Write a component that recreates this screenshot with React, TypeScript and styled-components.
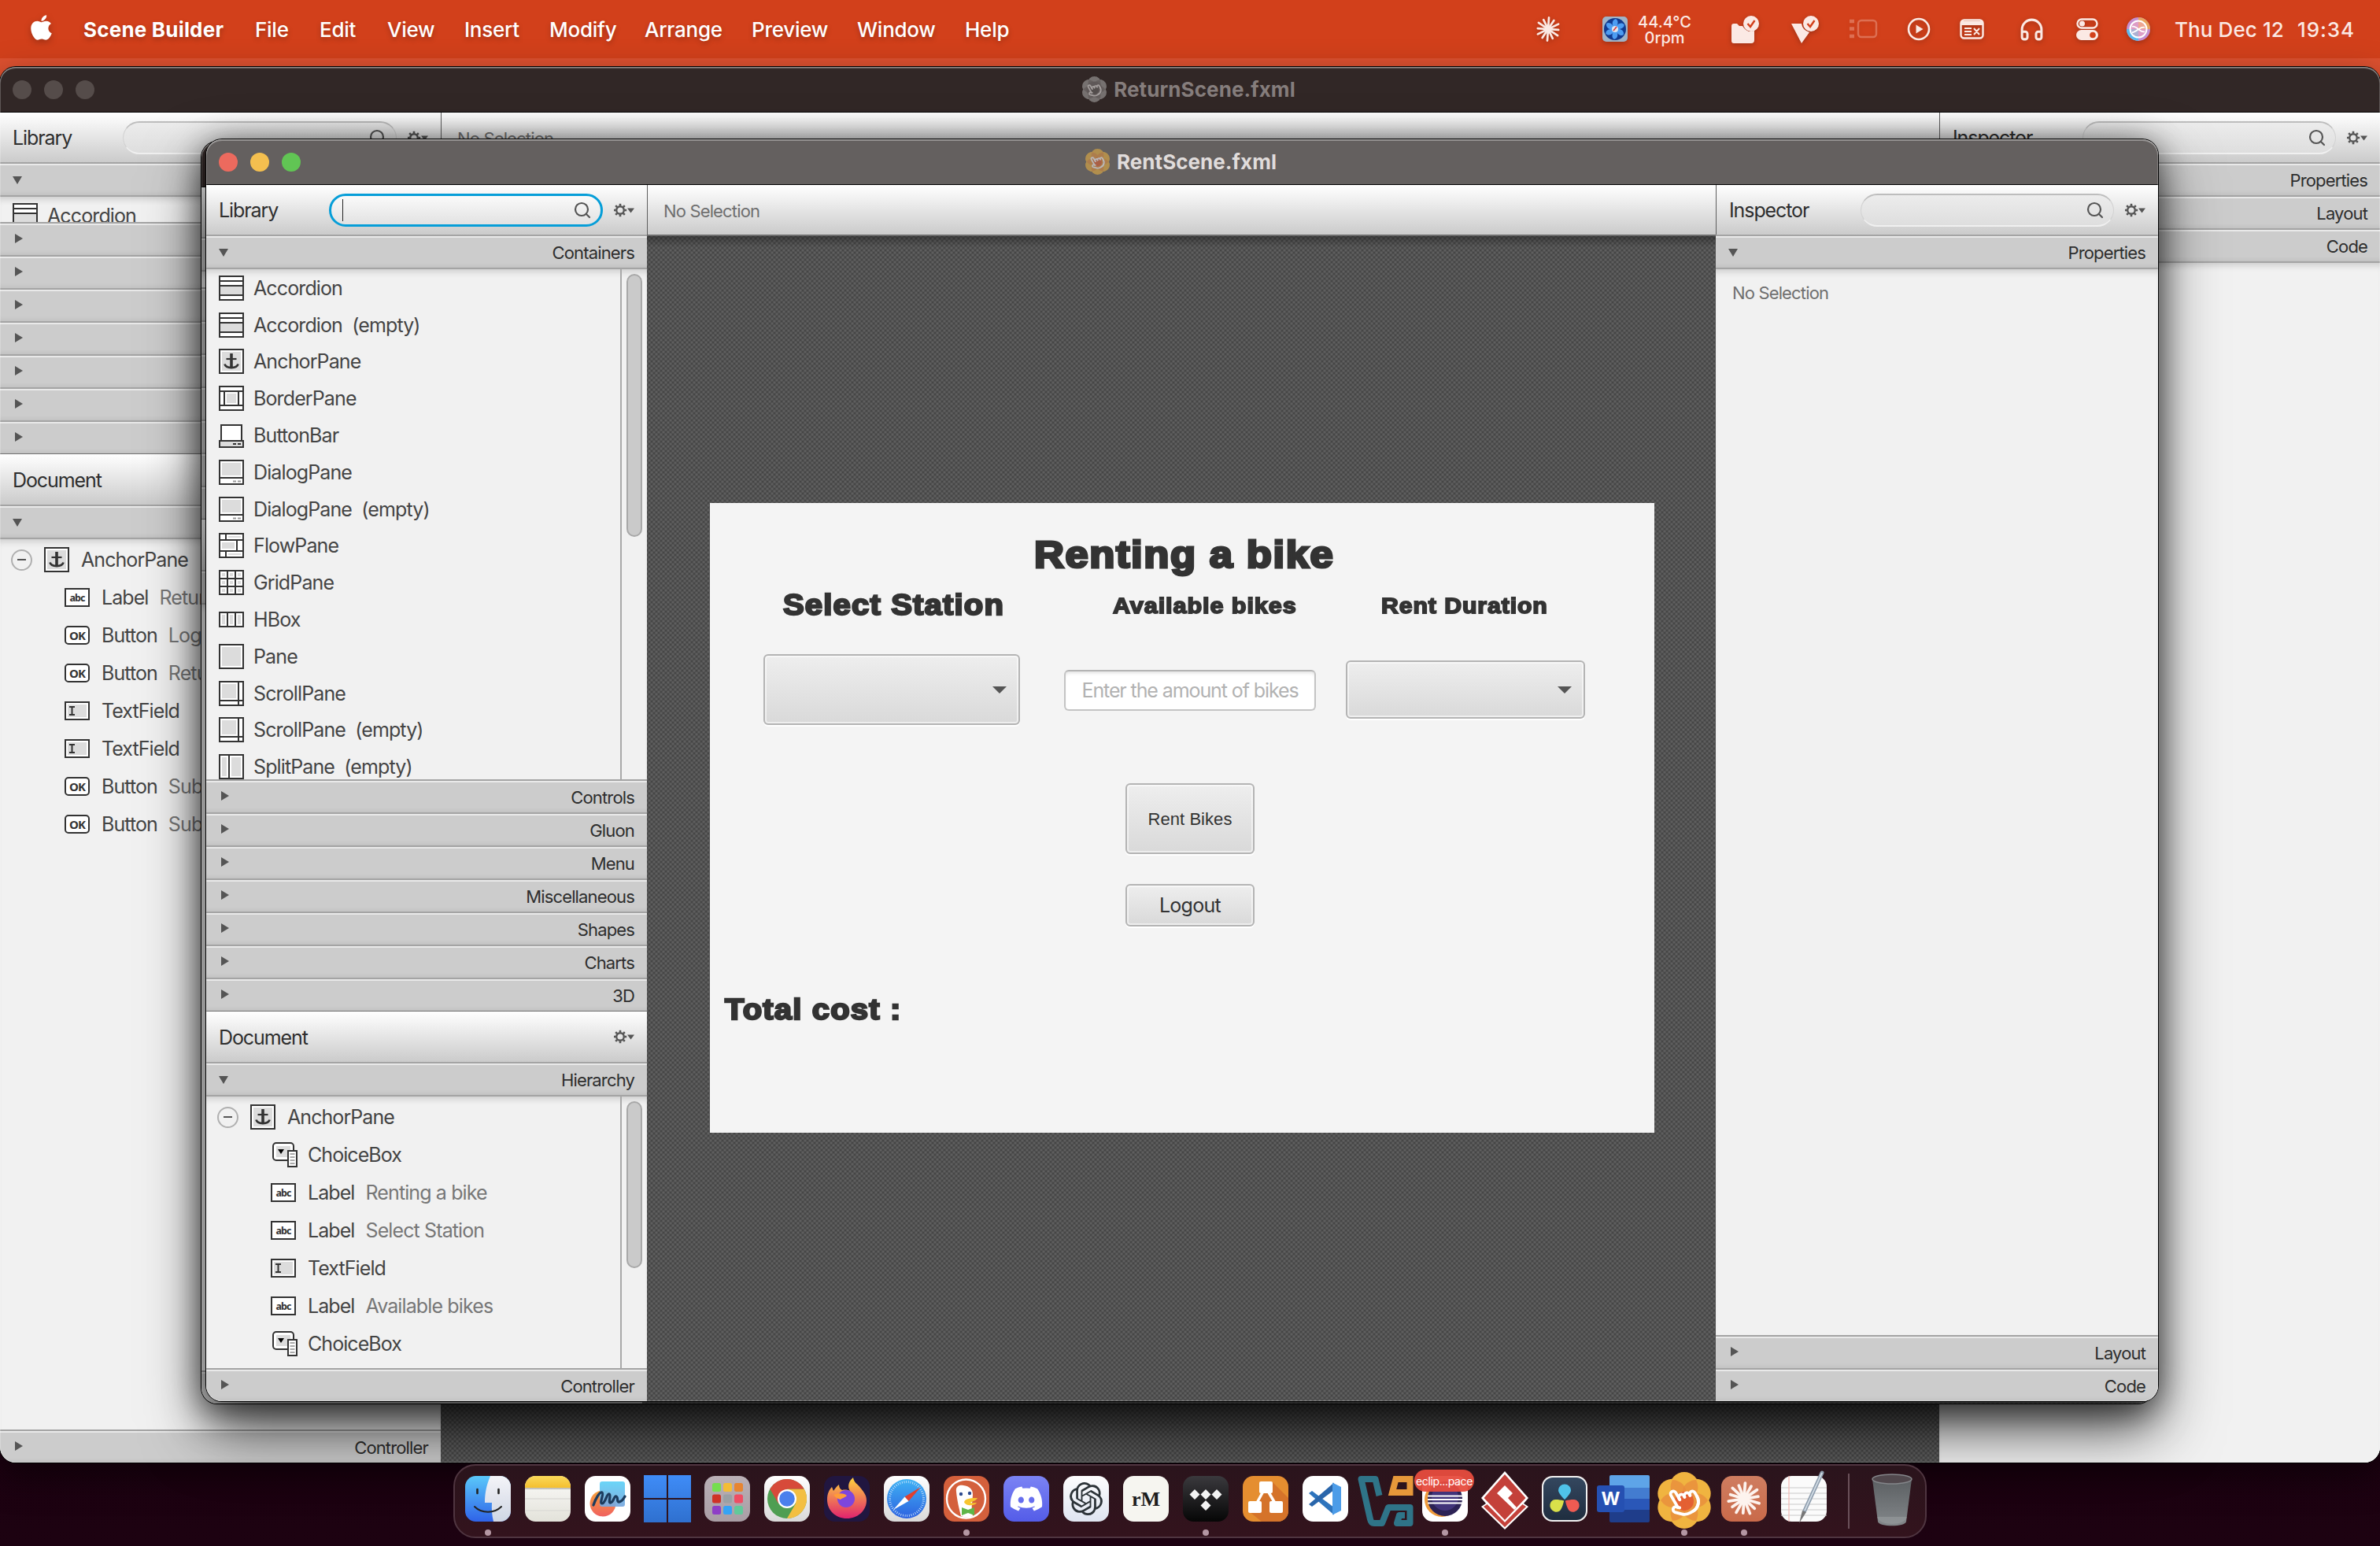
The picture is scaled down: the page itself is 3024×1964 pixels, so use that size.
import React from "react";
import styled, { createGlobalStyle, css } from "styled-components";
import { FaApple, FaDiscord } from "react-icons/fa";
import { SiOpenai } from "react-icons/si";
import { Pointer, Search, Headphones } from "lucide-react";

const Global = createGlobalStyle`
  html, body { margin: 0; padding: 0; background: #1c0210; }
  * { box-sizing: border-box; }
  body { font-family: Inter, "Liberation Sans", sans-serif; }
`;

const Desktop = styled.div`
  position: relative;
  width: 3024px;
  height: 1964px;
  overflow: hidden;
  background: linear-gradient(#dd5130 0, #dd5130 200px, #1a0010 1500px, #1d0211 1964px);
`;

/* ---------- menu bar ---------- */

const MenuBar = styled.header`
  height: 74px;
  background: #d2401b;
  display: flex;
  align-items: center;
  padding: 0 32px 0 39px;
  color: #fff;
  font-size: 26px;
`;

const AppleMark = styled(FaApple)`
  width: 27px;
  height: 36px;
  margin: -5px 40px 0 0;
  filter: drop-shadow(0 3px 4px rgba(0, 0, 0, 0.25));
`;

const MenuItem = styled.span<{ $w: number; $bold?: boolean }>`
  flex: none;
  width: ${(p) => p.$w}px;
  white-space: nowrap;
  font-weight: ${(p) => (p.$bold ? 700 : 500)};
  letter-spacing: ${(p) => (p.$bold ? "0.2px" : "-0.25px")};
  text-shadow: 0 3px 6px rgba(0, 0, 0, 0.25);
`;

const Spacer = styled.div`
  flex: 1;
`;

const StatusArea = styled.div`
  display: flex;
  align-items: center;
  color: #fbe9e4;
  svg {
    flex: none;
    filter: drop-shadow(0 2px 3px rgba(0, 0, 0, 0.25));
  }
`;

const StatusSlot = styled.div<{ $w: number }>`
  width: ${(p) => p.$w}px;
  height: 40px;
  display: flex;
  align-items: center;
  flex: none;
`;

const Sensor = styled.div`
  width: 118px;
  display: flex;
  flex-direction: column;
  font-size: 20px;
  line-height: 20px;
  font-weight: 500;
  letter-spacing: 0;
  padding-top: 2px;
  span {
    width: 68px;
    text-align: center;
  }
`;

const Clock = styled.span<{ $w: number; $ls: number }>`
  width: ${(p) => p.$w}px;
  white-space: nowrap;
  font-weight: 500;
  letter-spacing: ${(p) => p.$ls}px;
`;

/* ---------- windows ---------- */

const WindowFrame = styled.section<{ $x: number; $y: number; $w: number; $h: number; $active?: boolean }>`
  position: absolute;
  left: ${(p) => p.$x}px;
  top: ${(p) => p.$y}px;
  width: ${(p) => p.$w}px;
  height: ${(p) => p.$h}px;
  border-radius: 20px;
  overflow: hidden;
  display: flex;
  flex-direction: column;
  background: #f1f1f1;
  box-shadow: 0 0 0 1px #000,
    ${(p) => (p.$active ? "0 36px 80px rgba(0,0,0,.6), 0 0 36px rgba(0,0,0,.32)" : "0 16px 44px rgba(0,0,0,.5)")};
  &::after {
    content: "";
    position: absolute;
    inset: 0;
    border-radius: 20px;
    pointer-events: none;
    box-shadow: inset 0 2px 0 rgba(255, 255, 255, 0.28), inset 0 0 0 1px rgba(255, 255, 255, 0.22);
  }
`;

const TitleBar = styled.div<{ $active?: boolean }>`
  flex: none;
  height: 58px;
  display: grid;
  grid-template-columns: 1fr auto 1fr;
  align-items: center;
  background: ${(p) => (p.$active ? "#64605f" : "#312726")};
  border-bottom: 1px solid #000;
  padding: 0 16px;
`;

const Lights = styled.div`
  display: flex;
  gap: 16px;
`;

const Light = styled.i<{ $c: string }>`
  width: 24px;
  height: 24px;
  border-radius: 50%;
  background: ${(p) => p.$c};
`;

const Title = styled.div<{ $active?: boolean }>`
  display: flex;
  align-items: center;
  gap: 8px;
  margin: -1px 0 0 -4px;
  font-size: 26px;
  font-weight: 700;
  letter-spacing: ${(p) => (p.$active ? 0.05 : 0.08)}px;
  color: ${(p) => (p.$active ? "#e0dcdb" : "#857d7c")};
`;

const WindowBody = styled.div`
  flex: 1;
  display: flex;
  min-height: 0;
`;

const SidePanel = styled.aside`
  flex: none;
  width: 560px;
  display: flex;
  flex-direction: column;
`;

const InspectorPanel = styled.aside<{ $w: number }>`
  flex: none;
  width: ${(p) => p.$w}px;
  display: flex;
  flex-direction: column;
  background: #f1f1f1;
`;

const Center = styled.main`
  flex: 1;
  display: flex;
  flex-direction: column;
`;

const toolbar = css`
  flex: none;
  display: flex;
  align-items: center;
  background: linear-gradient(#ffffff, #cbcbcb);
`;

const PanelToolbar = styled.div<{ $doc?: boolean; $divider?: boolean }>`
  ${toolbar}
  height: ${(p) => (p.$doc ? 65 : 63)}px;
  border-top: ${(p) => (p.$doc ? "1px solid #6f6f6f" : "0")};
  border-left: ${(p) => (p.$divider ? "1px solid #5d5d5d" : "0")};
  padding: 0 16px 0 16px;
`;

const PanelTitle = styled.span`
  flex: 1;
  padding-top: 1px;
  font-size: 25px;
  letter-spacing: -1.1px;
  color: #2e2e2e;
`;

const CenterToolbar = styled.div`
  ${toolbar}
  height: 65px;
  border-left: 1px solid #5d5d5d;
  border-bottom: 2px solid #6b6b6b;
  padding-left: 20px;
`;

const Muted = styled.span`
  padding-top: 2px;
  font-size: 22px;
  letter-spacing: -0.85px;
  color: #6f6f6f;
`;

const SearchField = styled.div<{ $w: number; $focus?: boolean }>`
  width: ${(p) => p.$w}px;
  height: 42px;
  margin-right: 14px;
  border-radius: 21px;
  display: flex;
  align-items: center;
  justify-content: space-between;
  padding: 0 11px 0 14px;
  color: #555;
  ${(p) =>
    p.$focus
      ? css`
          border: 3px solid #069ed8;
          background: linear-gradient(#fafafa, #e2e2e2);
        `
      : css`
          border: 1px solid #d2d2d2;
          border-top: 2px solid #bdbdbd;
          border-bottom: 2px solid #f0f0f0;
          background: linear-gradient(#ececec, #dedede);
        `}
`;

const Caret = styled.i<{ $on?: boolean }>`
  width: 1px;
  height: 28px;
  background: ${(p) => (p.$on ? "#222" : "transparent")};
`;

const SectionBar = styled.div`
  flex: none;
  height: 42px;
  display: flex;
  align-items: center;
  justify-content: space-between;
  padding: 0 16px;
  background: #cccccc;
  border-top: 2px solid #a4a4a4;
  box-shadow: inset 0 2px 0 #e9e9e9, inset 0 -6px 6px -5px rgba(0, 0, 0, 0.08);
  font-size: 22px;
  letter-spacing: -0.85px;
  color: #2e2e2e;
  span {
    padding-top: 2px;
  }
`;

const Arrow = styled.svg<{ $open?: boolean }>`
  display: block;
  margin-top: ${(p) => (p.$open ? 1 : -2)}px;
  margin-left: ${(p) => (p.$open ? 0 : 3)}px;
`;

const SectionContent = styled.div`
  flex: 1;
  min-height: 0;
  overflow: hidden;
  display: flex;
  border-top: 2px solid #a4a4a4;
  background: #f1f1f1;
  box-shadow: inset 0 8px 8px -5px rgba(0, 0, 0, 0.16);
`;

const Rows = styled.div`
  flex: 1;
  display: flex;
  flex-direction: column;
`;

const Gutter = styled.div`
  flex: none;
  width: 34px;
  border-left: 2px solid #a9a9a9;
  padding: 6px 6px 0 6px;
`;

const Thumb = styled.div<{ $h: number }>`
  width: 20px;
  height: ${(p) => p.$h}px;
  border: 2px solid #a8a8a8;
  border-radius: 10px;
  background: #cacaca;
`;

const ListRow = styled.div`
  flex: none;
  height: 46.8px;
  display: flex;
  align-items: center;
  gap: 12px;
  padding: 1px 0 0 16px;
  font-size: 25px;
  letter-spacing: -0.88px;
  color: #444;
  white-space: pre;
`;

const TreeRow = styled.div<{ $root?: boolean }>`
  flex: none;
  height: 48px;
  display: flex;
  align-items: center;
  padding-left: ${(p) => (p.$root ? 14 : 82)}px;
  font-size: 25px;
  letter-spacing: -0.93px;
  color: #444;
  white-space: nowrap;
  svg {
    flex: none;
    margin-right: 15px;
  }
`;

const Tree = styled(Rows)`
  padding-top: 2px;
`;

const Disclosure = styled.i`
  width: 27px;
  height: 27px;
  margin-right: 15px;
  border: 2px solid #b0b0b0;
  border-radius: 50%;
  display: flex;
  align-items: center;
  justify-content: center;
  &::after {
    content: "";
    width: 11px;
    height: 2px;
    background: #555;
  }
`;

const Detail = styled.span`
  margin-left: 14px;
  letter-spacing: -0.88px;
  color: #777;
`;

const LibraryBlock = styled.div<{ $h: number }>`
  flex: none;
  height: ${(p) => p.$h}px;
  display: flex;
  flex-direction: column;
`;

const DocumentBlock = styled.div`
  flex: 1;
  min-height: 0;
  display: flex;
  flex-direction: column;
`;

const Workspace = styled.div`
  flex: 1;
  display: flex;
  align-items: center;
  justify-content: center;
  background-color: #454545;
  background-image: linear-gradient(rgba(0, 0, 0, 0.3), transparent 14px),
    radial-gradient(circle at 50% 50%, #606060 0.6px, rgba(96, 96, 96, 0) 2.6px),
    radial-gradient(circle at 50% 50%, #606060 0.6px, rgba(96, 96, 96, 0) 2.6px);
  background-size: 100% 100%, 6px 6px, 6px 6px;
  background-position: 0 0, 0 0, 3px 3px;
`;

/* ---------- designed scene (an AnchorPane: children sit at free coordinates) ---------- */

const AnchorScene = styled.div`
  position: relative;
  width: 1200px;
  height: 800px;
  margin: -2px 0 0 2px;
  background: #f4f4f4;
  color: #333;
`;

const Heading = styled.div<{ $x: number; $y: number; $size: number; $stretch: number }>`
  position: absolute;
  left: ${(p) => p.$x}px;
  top: ${(p) => p.$y}px;
  font-family: "Liberation Sans", Arial, sans-serif;
  font-size: ${(p) => p.$size}px;
  line-height: ${(p) => p.$size}px;
  font-weight: 700;
  letter-spacing: 0.03em;
  -webkit-text-stroke: 0.065em #333;
  transform: scaleX(${(p) => p.$stretch});
  transform-origin: 0 50%;
  white-space: nowrap;
`;

const Control = styled.div<{ $x: number; $y: number; $w: number; $h: number; $small?: boolean }>`
  position: absolute;
  left: ${(p) => p.$x}px;
  top: ${(p) => p.$y}px;
  width: ${(p) => p.$w}px;
  height: ${(p) => p.$h}px;
  display: flex;
  align-items: center;
  justify-content: center;
  border: 2px solid #b4b4b4;
  border-radius: 6px;
  background: linear-gradient(#eeeeee, #d9d9d9);
  box-shadow: inset 0 0 0 2px rgba(255, 255, 255, 0.55), 0 2px 0 #fff;
  font-family: ${(p) => (p.$small ? '"Liberation Sans", Arial, sans-serif' : "Inter, sans-serif")};
  font-size: ${(p) => (p.$small ? 22 : 25)}px;
  letter-spacing: ${(p) => (p.$small ? 0.05 : -0.7)}px;
  padding-top: ${(p) => (p.$small ? 2 : 0)}px;
  color: #333;
  white-space: nowrap;
`;

const Choice = styled(Control)`
  justify-content: flex-end;
  padding-right: 15px;
`;

const Field = styled(Control)`
  background: #fff;
  border-color: #c4c4c4;
  border-top-color: #b4b4b4;
  box-shadow: inset 0 4px 4px -2px rgba(0, 0, 0, 0.12);
  letter-spacing: -1.1px;
  color: #b2b2b2;
`;

/* ---------- dock ---------- */

const DockLayer = styled.nav`
  position: absolute;
  left: 576px;
  top: 1860px;
  width: 1872px;
  height: 94px;
  border: 2px solid #4f3540;
  border-radius: 28px;
  background: linear-gradient(#2a141c, #33131d);
  display: flex;
  padding: 0 0 0 4px;
`;

const DockSlot = styled.div<{ $w?: number }>`
  flex: none;
  width: ${(p) => p.$w ?? 76}px;
  height: 90px;
  position: relative;
  display: flex;
  flex-direction: column;
  align-items: center;
  padding-top: 5px;
  > svg {
    flex: none;
    overflow: visible;
  }
`;

const Running = styled.i`
  width: 8px;
  height: 8px;
  border-radius: 50%;
  background: #b497a3;
`;

const DockDivider = styled.i`
  flex: none;
  width: 2px;
  height: 70px;
  margin: 10px 0 0 18px;
  background: #6a5059;
`;

const Badge = styled.span`
  position: absolute;
  left: -1px;
  top: 5px;
  width: 76px;
  height: 28px;
  border-radius: 14px;
  background: rgba(231, 76, 62, 0.95);
  color: #fff;
  font-size: 14px;
  line-height: 29px;
  letter-spacing: -0.35px;
  text-align: center;
  white-space: nowrap;
`;

/* ---------- library & hierarchy glyphs ---------- */

const INK = "#333333";
const GREY = "#dcdcdc";

type GlyphName =
  | "accordion" | "anchor" | "border" | "buttonbar" | "dialog" | "flow" | "grid" | "hbox"
  | "pane" | "scroll" | "split" | "label" | "button" | "textfield" | "choice";

const g = (x: number, y: number, w: number, h: number) => (
  <rect key={`${x}-${y}`} x={x} y={y} width={w} height={h} fill={GREY} stroke="none" />
);

const panes: Partial<Record<GlyphName, React.ReactNode>> = {
  accordion: <>{g(2, 14, 28, 10)}<path d="M0 7H32M0 13H32M0 25H32" /></>,
  anchor: (
    <>
      {g(4, 4, 24, 24)}
      <path d="M16 6V24" strokeWidth={3.600} />
      <path d="M9.500 13H22.500" strokeWidth={2.200} />
      <path d="M7.500 19.500C9 25.500 23 25.500 24.500 19.500" strokeWidth={2.800} />
    </>
  ),
  border: <>{g(10, 10, 12, 12)}<path d="M0 7H32M0 25H32M7 7V25M25 7V25" /></>,
  dialog: <>{g(4, 4, 24, 16)}<path d="M0 23H32" /><path d="M18 27.500h4M24 27.500h4" stroke="#999" /></>,
  flow: <>{g(12, 4, 16, 2)}{g(4, 12, 16, 8)}{g(12, 26, 16, 2)}<path d="M0 9H32M0 23H32M9 0V9M23 9V23M9 23V32" /></>,
  grid: <>{[4, 14, 24].map((x) => [4, 14, 24].map((y) => g(x, y, 4, 4)))}<path d="M11 0V32M21 0V32M0 11H32M0 21H32" /></>,
  pane: g(4, 4, 24, 24),
  scroll: <>{g(4, 4, 18, 18)}<path d="M25 0V32M0 25H32" /></>,
  split: <>{g(4, 4, 6, 24)}{g(16, 4, 12, 24)}<path d="M13 0V32" /></>,
};

const WideText = styled.text`
  font-family: "Noto Sans", "Open Sans", sans-serif;
  font-weight: 700;
  fill: ${INK};
  stroke: none;
  text-anchor: middle;
`;

function Glyph({ name }: { name: GlyphName }) {
  const common = { width: 32, height: 32, viewBox: "0 0 32 32", stroke: INK, strokeWidth: 2, fill: "none" };
  switch (name) {
    case "buttonbar":
      return (
        <svg {...common}>
          <rect x={3} y={3} width={26} height={20} fill="#fff" />
          <rect x={1} y={23} width={30} height={8} fill={GREY} />
          <path d="M18 27h4M24 27h4" />
        </svg>
      );
    case "hbox":
      return (
        <svg {...common}>
          <rect x={1} y={7} width={30} height={18} fill="#fff" />
          {g(4, 10, 4, 12)}{g(14, 10, 4, 12)}{g(24, 10, 4, 12)}
          <path d="M11 7V25M21 7V25" />
        </svg>
      );
    case "label":
      return (
        <svg {...common}>
          <rect x={1} y={5} width={30} height={22} fill="#fff" />
          <WideText x={16} y={21} fontSize={12.500}>abc</WideText>
        </svg>
      );
    case "button":
      return (
        <svg {...common}>
          <rect x={1} y={5} width={30} height={22} rx={4} fill="#fff" />
          <WideText x={16} y={21.500} fontSize={15}>OK</WideText>
        </svg>
      );
    case "textfield":
      return (
        <svg {...common}>
          <rect x={1} y={5} width={30} height={22} fill="#fff" />
          {g(4, 8, 24, 16)}
          <path d="M6 11h7M6 21h7M9.500 11v10" />
        </svg>
      );
    case "choice":
      return (
        <svg {...common} overflow="visible">
          <rect x={3} y={1} width={26} height={22} rx={4} fill="#fff" />
          {g(7, 5, 18, 14)}
          <path d="M9 9h8l-4 6z" fill="#000" stroke="none" />
          <rect x={22} y={11} width={11} height={20} fill="#fff" />
          <path d="M24.500 15h6M24.500 19h6M24.500 23h6M24.500 27h6" stroke="#aaa" />
        </svg>
      );
    default:
      return (
        <svg {...common}>
          <rect x={1} y={1} width={30} height={30} fill="#fff" stroke="none" />
          {panes[name]}
          <rect x={1} y={1} width={30} height={30} />
        </svg>
      );
  }
}

const Gear = () => (
  <svg width={26} height={18} viewBox="0 0 26 18" fill="none" stroke="#555">
    <circle cx={8} cy={9} r={4.800} strokeWidth={2.400} />
    {[0, 45, 90, 135, 180, 225, 270, 315].map((a) => (
      <path key={a} d="M8 3.500V0.800" strokeWidth={2.600} transform={`rotate(${a} 8 9)`} />
    ))}
    <path d="M17 6.500h9l-4.500 6z" fill="#555" stroke="none" />
  </svg>
);

const Toggle = ({ open }: { open?: boolean }) =>
  open ? (
    <Arrow $open width={12} height={10}><path d="M0 0h12l-6 10z" fill="#555" /></Arrow>
  ) : (
    <Arrow width={10} height={12}><path d="M0 0v12l10-6z" fill="#555" /></Arrow>
  );

const Section = ({ label, open }: { label?: string; open?: boolean }) => (
  <SectionBar>
    <Toggle open={open} />
    <span>{label}</span>
  </SectionBar>
);

/* ---------- Scene Builder brand flower ---------- */

const Flower = ({ size, opacity = 1, grey }: { size: number; opacity?: number; grey?: boolean }) => {
  const ring = [0, 60, 120, 180, 240, 300];
  return (
    <svg width={size} height={size} viewBox="0 0 72 72" opacity={opacity}>
      {ring.map((a) => (
        <circle key={a} cx={36} cy={18.500} r={18.500} fill={grey ? "#8e8a89" : "#f0b440"} transform={`rotate(${a} 36 36)`} />
      ))}
      <circle cx={36} cy={36} r={22} fill={grey ? "#6f6a69" : "#f0b440"} />
      {ring.map((a) => (
        <path key={a} d="M36 36C24 28 24 14 36 6 48 14 48 28 36 36Z" fill={grey ? "#6f6a69" : "#e88b3c"} opacity={0.75}
          transform={`rotate(${a + 30} 36 36)`} />
      ))}
      <circle cx={36} cy={37} r={12} fill={grey ? "#5b5655" : "#e2542f"} opacity={0.8} />
      <Pointer x={14} y={15} width={42} height={42} color={grey ? "#c9c5c4" : "#ffffff"} strokeWidth={2.200}
        transform="rotate(-30 36 36)" />
    </svg>
  );
};

const Burst = ({ size, color, rays = 12 }: { size: number; color: string; rays?: number }) => (
  <svg width={size} height={size} viewBox="0 0 40 40" stroke={color} strokeWidth={3.400} strokeLinecap="round">
    {Array.from({ length: rays }, (_, i) => (
      <path key={i} d={i % 2 ? "M20 17V3.500" : "M20 17V1.800"} transform={`rotate(${(360 / rays) * i + 4} 20 20)`} />
    ))}
    <circle cx={20} cy={20} r={4} fill={color} stroke="none" />
  </svg>
);

/* ---------- window parts ---------- */

type ListItem = { icon: GlyphName; text: string };
type Node = { icon: GlyphName; text: string; detail?: string };

const containers: ListItem[] = [
  { icon: "accordion", text: "Accordion" },
  { icon: "accordion", text: "Accordion  (empty)" },
  { icon: "anchor", text: "AnchorPane" },
  { icon: "border", text: "BorderPane" },
  { icon: "buttonbar", text: "ButtonBar" },
  { icon: "dialog", text: "DialogPane" },
  { icon: "dialog", text: "DialogPane  (empty)" },
  { icon: "flow", text: "FlowPane" },
  { icon: "grid", text: "GridPane" },
  { icon: "hbox", text: "HBox" },
  { icon: "pane", text: "Pane" },
  { icon: "scroll", text: "ScrollPane" },
  { icon: "scroll", text: "ScrollPane  (empty)" },
  { icon: "split", text: "SplitPane  (empty)" },
];

const sections = ["Controls", "Gluon", "Menu", "Miscellaneous", "Shapes", "Charts", "3D"];

const rentNodes: Node[] = [
  { icon: "choice", text: "ChoiceBox" },
  { icon: "label", text: "Label", detail: "Renting a bike" },
  { icon: "label", text: "Label", detail: "Select Station" },
  { icon: "textfield", text: "TextField" },
  { icon: "label", text: "Label", detail: "Available bikes" },
  { icon: "choice", text: "ChoiceBox" },
];

const returnNodes: Node[] = [
  { icon: "label", text: "Label", detail: "Retur" },
  { icon: "button", text: "Button", detail: "Log" },
  { icon: "button", text: "Button", detail: "Retu" },
  { icon: "textfield", text: "TextField" },
  { icon: "textfield", text: "TextField" },
  { icon: "button", text: "Button", detail: "Sub" },
  { icon: "button", text: "Button", detail: "Sub" },
];

function Finder({ width, focus }: { width: number; focus?: boolean }) {
  return (
    <>
      <SearchField $w={width} $focus={focus}>
        <Caret $on={focus} />
        <Search size={24} strokeWidth={2.200} />
      </SearchField>
      <Gear />
    </>
  );
}

function LeftPanel(props: {
  libraryHeight: number;
  items: ListItem[];
  labels?: boolean;
  focus?: boolean;
  thumbs?: [number, number];
  nodes: Node[];
}) {
  const { libraryHeight, items, labels, focus, thumbs, nodes } = props;
  return (
    <SidePanel>
      <LibraryBlock $h={libraryHeight}>
        <PanelToolbar>
          <PanelTitle>Library</PanelTitle>
          <Finder width={348} focus={focus} />
        </PanelToolbar>
        <Section open label={labels ? "Containers" : ""} />
        <SectionContent>
          <Rows>
            {items.map((it) => (
              <ListRow key={it.text}>
                <Glyph name={it.icon} />
                {it.text}
              </ListRow>
            ))}
          </Rows>
          {thumbs && <Gutter><Thumb $h={thumbs[0]} /></Gutter>}
        </SectionContent>
        {sections.map((s) => (
          <Section key={s} label={labels ? s : ""} />
        ))}
      </LibraryBlock>
      <DocumentBlock>
        <PanelToolbar $doc>
          <PanelTitle>Document</PanelTitle>
          <Gear />
        </PanelToolbar>
        <Section open label={labels ? "Hierarchy" : ""} />
        <SectionContent>
          <Tree>
            <TreeRow $root>
              <Disclosure />
              <Glyph name="anchor" />
              AnchorPane
            </TreeRow>
            {nodes.map((n, i) => (
              <TreeRow key={i}>
                <Glyph name={n.icon} />
                {n.text}
                {n.detail && <Detail>{n.detail}</Detail>}
              </TreeRow>
            ))}
          </Tree>
          {thumbs && <Gutter><Thumb $h={thumbs[1]} /></Gutter>}
        </SectionContent>
        <Section label="Controller" />
      </DocumentBlock>
    </SidePanel>
  );
}

const WindowTitle = ({ active, children }: { active?: boolean; children: string }) => {
  const lights = active ? ["#ec6a5e", "#f4bf4f", "#61c554"] : ["#554c4a", "#554c4a", "#554c4a"];
  return (
    <TitleBar $active={active}>
      <Lights>{lights.map((c, i) => <Light key={i} $c={c} />)}</Lights>
      <Title $active={active}>
        <Flower size={33} opacity={active ? 0.55 : 0.75} grey={!active} />
        {children}
      </Title>
    </TitleBar>
  );
};

const DropArrow = () => (
  <svg width={18} height={9}><path d="M0 0h18l-9 9z" fill="#555" /></svg>
);

function ReturnWindow() {
  return (
    <WindowFrame $x={0} $y={85} $w={3024} $h={1773}>
      <WindowTitle>ReturnScene.fxml</WindowTitle>
      <WindowBody>
        <LeftPanel libraryHeight={433} items={containers.slice(0, 1)} nodes={returnNodes} />
        <Center>
          <CenterToolbar><Muted>No Selection</Muted></CenterToolbar>
          <Workspace />
        </Center>
        <InspectorPanel $w={560}>
          <PanelToolbar $divider>
            <PanelTitle>Inspector</PanelTitle>
            <Finder width={322} />
          </PanelToolbar>
          <Section label="Properties" />
          <Section label="Layout" />
          <Section label="Code" />
          <SectionContent />
        </InspectorPanel>
      </WindowBody>
    </WindowFrame>
  );
}

const InspectorContent = styled(SectionContent)`
  padding: 15px 21px;
`;

function RentWindow() {
  return (
    <WindowFrame $x={262} $y={177} $w={2480} $h={1603} $active>
      <WindowTitle active>RentScene.fxml</WindowTitle>
      <WindowBody>
        <LeftPanel libraryHeight={1049} items={containers} labels focus thumbs={[334, 212]} nodes={rentNodes} />
        <Center>
          <CenterToolbar><Muted>No Selection</Muted></CenterToolbar>
          <Workspace>
            <AnchorScene>
              <Heading $x={412} $y={42} $size={48} $stretch={1.095}>Renting a bike</Heading>
              <Heading $x={93} $y={112} $size={36} $stretch={1.110}>Select Station</Heading>
              <Heading $x={512} $y={117} $size={28} $stretch={1.092}>Available bikes</Heading>
              <Heading $x={853} $y={117} $size={28} $stretch={1.080}>Rent Duration</Heading>
              <Choice $x={68} $y={192} $w={326} $h={90}><DropArrow /></Choice>
              <Field $x={450} $y={212} $w={320} $h={52}>Enter the amount of bikes</Field>
              <Choice $x={808} $y={200} $w={304} $h={74}><DropArrow /></Choice>
              <Control $x={528} $y={356} $w={164} $h={90} $small>Rent Bikes</Control>
              <Control $x={528} $y={484} $w={164} $h={54}>Logout</Control>
              <Heading $x={19} $y={626} $size={36} $stretch={1.110}>Total cost :</Heading>
            </AnchorScene>
          </Workspace>
        </Center>
        <InspectorPanel $w={562}>
          <PanelToolbar $divider>
            <PanelTitle>Inspector</PanelTitle>
            <Finder width={322} />
          </PanelToolbar>
          <Section open label="Properties" />
          <InspectorContent><Muted>No Selection</Muted></InspectorContent>
          <Section label="Layout" />
          <Section label="Code" />
        </InspectorPanel>
      </WindowBody>
    </WindowFrame>
  );
}

/* A third document window peeks out from under the active one. */
function HiddenWindow() {
  return (
    <WindowFrame $x={256} $y={180} $w={2480} $h={1603}>
      <TitleBar />
      <WindowBody>
        <SidePanel>
          <LibraryBlock $h={421}>
            <PanelToolbar />
            <Section open />
            <SectionContent />
            {sections.map((s) => <Section key={s} />)}
          </LibraryBlock>
          <DocumentBlock>
            <PanelToolbar $doc />
            <Section open />
            <SectionContent />
            <Section />
          </DocumentBlock>
        </SidePanel>
        <Center><Workspace /></Center>
      </WindowBody>
    </WindowFrame>
  );
}

/* ---------- dock artwork ---------- */

const Tile = ({ fill, children }: { fill: string; children?: React.ReactNode }) => (
  <svg width={58} height={76} viewBox="0 -8 58 76">
    <rect width={58} height={58} rx={13.500} fill={fill} />
    {children}
  </svg>
);

const DefsSvg = styled.svg`
  position: absolute;
`;

const Defs = () => (
  <DefsSvg width={0} height={0}>
    <defs>
      {[
        ["finder", "#5ac8fa", "#2f63e8"],
        ["face", "#f4f4f8", "#cfd6e4"],
        ["notes", "#fbfbf9", "#e3e2da"],
        ["noteTop", "#fbd95a", "#f4bf2e"],
        ["win", "#3f8cf7", "#2f70cf"],
        ["pad", "#bab0b6", "#a99ea5"],
        ["white", "#ffffff", "#d9d9d9"],
        ["blue", "#3fb2f4", "#2d62e0"],
        ["disc", "#7b83f4", "#545ce8"],
        ["gpt", "#fdfdfe", "#dfe5f1"],
        ["black", "#3a393d", "#060606"],
        ["davinci", "#34475f", "#1f2d3f"],
        ["clay", "#cf7d60", "#c96a4a"],
        ["bin", "#5b5f62", "#83878a"],
        ["ff", "#ffd43c", "#e0226e"],
        ["orange", "#f6a23c", "#f0615f"],
        ["sky", "#5fd2f7", "#7aa7de"],
      ].map(([id, a, b]) => (
        <linearGradient key={id} id={id} x1="0" y1="0" x2="0" y2="1">
          <stop offset="0" stopColor={a} />
          <stop offset="1" stopColor={b} />
        </linearGradient>
      ))}
      <clipPath id="tile"><rect width="58" height="58" rx="13.500" /></clipPath>
    </defs>
  </DefsSvg>
);

const SerifMark = styled.text`
  font-family: "Liberation Serif", serif;
  font-weight: 700;
  font-size: 26px;
  text-anchor: middle;
`;

const WordMark = styled.text`
  font-family: Inter, sans-serif;
  font-weight: 700;
  font-size: 23px;
  fill: #fff;
  text-anchor: middle;
`;

const dock: { id: string; art: React.ReactNode; running?: boolean; badge?: string }[] = [
  {
    id: "finder", running: true,
    art: (
      <Tile fill="url(#finder)">
        <path clipPath="url(#tile)" d="M32 0C27 12 25 22 25 34h9c-.5 8 0 16 2 24h22V0z" fill="url(#face)" />
        <path d="M15.500 17v5M42.500 17v5" stroke="#222" strokeWidth={2.600} strokeLinecap="round" />
        <path d="M12 39c9 9 25 9 34 0" stroke="#222" strokeWidth={2} fill="none" strokeLinecap="round" />
      </Tile>
    ),
  },
  {
    id: "notes",
    art: (
      <Tile fill="url(#notes)">
        <path clipPath="url(#tile)" d="M0 0h58v15H0z" fill="url(#noteTop)" />
        <path d="M0 16h58" stroke="#b5b2a8" strokeWidth={1.500} />
        <path d="M0 29h58M0 44h58" stroke="#dddcd7" strokeWidth={1.500} />
      </Tile>
    ),
  },
  {
    id: "freeform",
    art: (
      <Tile fill="#fff">
        <circle cx={23} cy={35} r={16.500} fill="url(#orange)" />
        <rect x={19} y={7} width={32} height={32} rx={3} fill="url(#sky)" opacity={0.93} />
        <path d="M11 37c3-9 8-17 11-16s-4 14 0 14 6-13 9-12-2 12 2 11 4-9 7-8 0 8 4 7 5-4 7-7" fill="none" stroke="#1c3c5e" strokeWidth={3.200} strokeLinecap="round" />
      </Tile>
    ),
  },
  {
    id: "windows",
    art: (
      <svg width={60} height={76} viewBox="-1 -8 60 76">
        <path d="M-1-1h29v29h-29zM30-1h29v29H30zM-1 30h29v29h-29zM30 30h29v29H30z" fill="url(#win)" />
      </svg>
    ),
  },
  {
    id: "launchpad",
    art: (
      <Tile fill="url(#pad)">
        {["#76de4f", "#f4bd36", "#e78532", "#cf3227", "#9aa0a4", "#ef4d63", "#8e3fc6", "#36a3f5", "#62c99a"].map((c, i) => (
          <rect key={c} x={10 + (i % 3) * 14} y={9 + Math.floor(i / 3) * 14.500} width={11} height={11} rx={2.500} fill={c} />
        ))}
      </Tile>
    ),
  },
  {
    id: "chrome",
    art: (
      <Tile fill="url(#white)">
        <circle cx={29} cy={29} r={25} fill="#4f9e52" />
        <path d="M29 16.500h21.700A25 25 0 0 1 29 54L40 35z" fill="#f3bf42" />
        <path d="M7.300 16.500A25 25 0 0 1 50.700 16.500H29L18 35z" fill="#d74a3a" />
        <circle cx={29} cy={29} r={12} fill="#fff" />
        <circle cx={29} cy={29} r={9.800} fill="#4a80ec" />
      </Tile>
    ),
  },
  {
    id: "firefox",
    art: (
      <Tile fill="#211640">
        <path d="M4 30c0-8 3-13 6-16l2 5c2-3 4-6 7-8 0 4 2 6 4 7 4-1 8 0 10 1-4-6-1-13 4-17 1 7 6 8 10 14 3 4 7 8 7 15 0 13-11 23-25 23S4 44 4 30z" fill="url(#ff)" />
        <circle cx={28} cy={29} r={11} fill="#7d46dc" />
        <path d="M12 24c7-3 15-2 17 1-3 3-6 3-8 5-4-1-7-3-9-6z" fill="#ff9c38" />
      </Tile>
    ),
  },
  {
    id: "safari",
    art: (
      <Tile fill="url(#white)">
        <circle cx={29} cy={29} r={25} fill="url(#blue)" />
        <circle cx={29} cy={29} r={21.500} fill="none" stroke="#cfe6fb" strokeWidth={3} strokeDasharray="0.8 1.900" />
        <path d="M47 14 31.500 32 26.500 26.500z" fill="#e0402f" />
        <path d="M12 43l14.500-16.500L31.500 32z" fill="#fff" />
      </Tile>
    ),
  },
  {
    id: "duckduckgo", running: true,
    art: (
      <Tile fill="#d4603c">
        <circle cx={28.500} cy={29} r={24.500} fill="none" stroke="#fff" strokeWidth={2.400} />
        <path d="M16 20c-1-7 4-9 9-8 8 1 12 5 12 12l-1 12c-1 6 1 12 1 15-4 2-10 2-15 0-2-8-5-20-6-31z" fill="#fff" />
        <circle cx={22} cy={23} r={2.200} fill="#2d4a8e" />
        <circle cx={33} cy={22} r={2.200} fill="#2d4a8e" />
        <path d="M26 33c2-5 10-5 17-5-2 4-7 4-9 6 3 1 6 0 8 0-3 5-15 4-16-1z" fill="#f7c52f" />
        <path d="M23 40l8 3 8-3v10l-8-3-8 3z" fill="#5fb548" />
      </Tile>
    ),
  },
  {
    id: "discord",
    art: <Tile fill="url(#disc)"><FaDiscord x={7} y={7} size={44} color="#fff" /></Tile>,
  },
  {
    id: "chatgpt",
    art: <Tile fill="url(#gpt)"><SiOpenai x={8} y={8} size={42} color="#2c3338" /></Tile>,
  },
  {
    id: "remarkable",
    art: <Tile fill="#f6f5f0"><SerifMark x={29} y={38} fill="#1c1c1c">rM</SerifMark></Tile>,
  },
  {
    id: "tidal", running: true,
    art: (
      <Tile fill="url(#black)">
        <path d="M15 17l6.500 6.500L15 30l-6.500-6.500zM29 17l6.500 6.500L29 30l-6.500-6.500zM43 17l6.500 6.500L43 30l-6.500-6.500zM29 31l6.500 6.500L29 44l-6.500-6.500z" fill="#f3f3f3" />
      </Tile>
    ),
  },
  {
    id: "drawio",
    art: (
      <Tile fill="#e58e30">
        <path clipPath="url(#tile)" d="M38 8l20 20v30H24L8 45 29 20z" fill="#d5732a" />
        <path d="M29 14 16 38M29 14 43 38" stroke="#fff" strokeWidth={3.500} />
        <rect x={21} y={7} width={17} height={15} rx={2} fill="#fff" />
        <rect x={7} y={32} width={17} height={15} rx={2} fill="#fff" />
        <rect x={34} y={32} width={17} height={15} rx={2} fill="#fff" />
      </Tile>
    ),
  },
  {
    id: "vscode",
    art: (
      <Tile fill="#fff">
        <path d="M8 22l4-3 28 21v9.500z" fill="#2e74bd" />
        <path d="M8 36l4 3 28-21V8.500z" fill="#2a66ab" />
        <path d="M38 8.500L49 14v30L38 49.500z" fill="#4c9ce8" />
      </Tile>
    ),
  },
  {
    id: "visual-paradigm",
    art: (
      <svg width={72} height={80} viewBox="0 0 72 80">
        <path
          fill="none"
          stroke="#2f7488"
          strokeWidth={8}
          strokeLinejoin="round"
          d="M28.500 33 23.500 12H5.500L17 63q1 5 5 5h10L40 48H67.500V68H51L54 58h7"
        />
        <path fill="none" stroke="#e6983a" strokeWidth={8} d="M45 29 49.500 12H67.500v17z" />
      </svg>
    ),
  },
  {
    id: "eclipse", running: true, badge: "eclip...pace",
    art: (
      <Tile fill="#fff">
        <circle cx={25} cy={30} r={22} fill="#ef9a3b" />
        <circle cx={29} cy={29} r={22} fill="#2c2255" />
        <circle cx={29} cy={27} r={17} fill="#41347a" />
        <path d="M7 25.500h44M7 30h44M7 34.500h44" stroke="#fff" strokeWidth={2.200} />
      </Tile>
    ),
  },
  {
    id: "diamond",
    art: (
      <svg width={64} height={76} viewBox="0 0 64 76">
        <path d="M32 2 62 36 56 43 62 47 32 76 2 47 8 43 2 36z" fill="#fff" />
        <path d="M32 6 58.500 36 32 64 5.500 36z" fill="#c4413a" />
        <path d="M5 47l4.500-3L32 67l22.500-23 4.500 3L32 73z" fill="#c4413a" />
        <path d="M32 20 42 30 36 36 47 48 44 51 22 30z" fill="#fff" />
      </svg>
    ),
  },
  {
    id: "resolve",
    art: (
      <Tile fill="#f1f1f1">
        <rect x={2} y={2} width={54} height={54} rx={12} fill="url(#davinci)" />
        <path d="M29 30c-5-5-8-9-8-12a8 7.500 0 0 1 16 0c0 3-3 7-8 12z" fill="#4fc3ea" />
        <path d="M29 30c-5-5-8-9-8-12a8 7.500 0 0 1 16 0c0 3-3 7-8 12z" fill="#ef5b52" transform="rotate(122 29 31)" />
        <path d="M29 30c-5-5-8-9-8-12a8 7.500 0 0 1 16 0c0 3-3 7-8 12z" fill="#d9e04a" transform="rotate(-122 29 31)" />
      </Tile>
    ),
  },
  {
    id: "word",
    art: (
      <svg width={70} height={76} viewBox="2 -8 70 76">
        <rect x={18} y={-1} width={51} height={20} rx={2} fill="#5ea4e8" />
        <rect x={18} y={40} width={51} height={19} rx={2} fill="#1f3d8a" />
        <rect x={18} y={15} width={51} height={14} fill="#437cd0" />
        <rect x={18} y={29} width={51} height={14} fill="#2a57b8" />
        <rect x={2} y={12} width={35} height={34} rx={3} fill="#2550b2" />
        <WordMark x={19.500} y={37}>W</WordMark>
      </svg>
    ),
  },
  {
    id: "scenebuilder", running: true,
    art: <svg width={72} height={76} viewBox="0 0 72 76"><g transform="translate(0 3)"><Flower size={72} /></g></svg>,
  },
  {
    id: "claude", running: true,
    art: <Tile fill="url(#clay)"><svg x={7} y={7} width={44} height={44}><Burst size={44} color="#fdf3ee" rays={14} /></svg></Tile>,
  },
  {
    id: "textedit",
    art: (
      <Tile fill="#fbfbfb">
        <path d="M0 15h58M0 22h58M0 29h58M0 36h58M0 43h58M0 50h58" stroke="#c9c9c9" strokeWidth={1} />
        <path d="M10 0v58" stroke="#f3b9b4" strokeWidth={1.200} />
        <path d="M52-4 30 44" stroke="#8f9eae" strokeWidth={5} strokeLinecap="round" />
        <path d="M52-4 30 44" stroke="#d3dde6" strokeWidth={1.800} />
        <path d="M32 46 23 60l4-16z" fill="#777" />
      </Tile>
    ),
  },
];

function Dock() {
  return (
    <DockLayer>
      {dock.map((d) => (
        <DockSlot key={d.id}>
          {d.art}
          {d.badge && <Badge>{d.badge}</Badge>}
          {d.running && <Running />}
        </DockSlot>
      ))}
      <DockDivider />
      <DockSlot $w={108}>
        <svg width={52} height={76} viewBox="0 0 52 76">
          <path d="M1 12 8 66c1 7 35 7 36 0L51 12z" fill="url(#bin)" />
          <path d="M7 60c2 12 36 12 38 0" fill="#9ea1a3" opacity={0.5} />
          <ellipse cx={26} cy={12} rx={25} ry={6} fill="#51484d" stroke="#84868a" strokeWidth={1.500} />
        </svg>
      </DockSlot>
    </DockLayer>
  );
}

/* ---------- menu bar content ---------- */

const menus: [string, number][] = [
  ["File", 82], ["Edit", 86], ["View", 98], ["Insert", 108], ["Modify", 121],
  ["Arrange", 136], ["Preview", 134], ["Window", 137], ["Help", 70],
];

const Check = () => (
  <>
    <circle cx={26} cy={11} r={10} fill="currentColor" />
    <path d="M21.500 11l3.500 4 5.500-8" stroke="#d2401b" strokeWidth={2.400} fill="none" />
  </>
);

function Status() {
  return (
    <StatusArea>
      <StatusSlot $w={85}><Burst size={32} color="#fbe9e4" /></StatusSlot>
      <StatusSlot $w={45}>
        <svg width={32} height={32} viewBox="0 0 32 32">
          <rect width={32} height={32} rx={5} fill="#9fb4c8" />
          <circle cx={16} cy={16} r={14} fill="#123a8f" />
          {[0, 60, 120, 180, 240, 300].map((a) => (
            <path key={a} d="M16 16C11 11 12 4 17 3c4 2 3 8-1 13z" fill="#4d9df2" transform={`rotate(${a} 16 16)`} />
          ))}
          <circle cx={16} cy={16} r={4} fill="#dfe6ee" />
          <path d="M14 18l4-5" stroke="#d33" strokeWidth={1.500} />
        </svg>
      </StatusSlot>
      <Sensor><span>44.4°C</span><span>0rpm</span></Sensor>
      <StatusSlot $w={76}>
        <svg width={38} height={36} viewBox="0 0 38 36">
          <path d="M1 14q0-3 3-3h4l3 3h4q3 5 8 7l7-1v12q0 4-4 4H4q-3 0-3-3z" fill="currentColor" />
          <Check />
        </svg>
      </StatusSlot>
      <StatusSlot $w={74}>
        <svg width={38} height={36} viewBox="0 0 38 36">
          <path d="M1 11h13q1 8 10 11L14 36z" fill="currentColor" />
          <Check />
        </svg>
      </StatusSlot>
      <StatusSlot $w={74}>
        <svg width={37} height={26} viewBox="0 0 37 26" opacity={0.28} fill="none" stroke="currentColor" strokeWidth={2.400}>
          <rect x={12} y={2} width={23} height={21} rx={4} />
          <path d="M1 3h6M1 12.500h6M1 22h6" strokeWidth={4.500} />
        </svg>
      </StatusSlot>
      <StatusSlot $w={67}>
        <svg width={30} height={30} viewBox="0 0 30 30" fill="none" stroke="currentColor" strokeWidth={2.600}>
          <circle cx={15} cy={15} r={13} />
          <path d="M11.500 9.500v11l9-5.500z" fill="currentColor" stroke="none" />
        </svg>
      </StatusSlot>
      <StatusSlot $w={75}>
        <svg width={31} height={26} viewBox="0 0 31 26" fill="none" stroke="currentColor" strokeWidth={2.400}>
          <rect x={1.500} y={1.500} width={28} height={23} rx={4} />
          <path d="M2 3h27v5H2z" fill="currentColor" stroke="none" />
          <path d="M6 12h9M6 16h9M6 20h9M18 12l7 8M25 12l-7 8" strokeWidth={2} />
        </svg>
      </StatusSlot>
      <StatusSlot $w={73}><Headphones size={33} strokeWidth={2.200} /></StatusSlot>
      <StatusSlot $w={64}>
        <svg width={28} height={28} viewBox="0 0 28 28" fill="none" stroke="currentColor" strokeWidth={2.400}>
          <rect x={1.500} y={1.500} width={25} height={11} rx={5.500} />
          <circle cx={7.500} cy={7} r={3.500} fill="currentColor" stroke="none" />
          <rect x={0} y={15} width={28} height={13} rx={6.500} fill="currentColor" stroke="none" />
          <circle cx={21} cy={21.500} r={3.800} fill="#d2401b" stroke="none" />
        </svg>
      </StatusSlot>
      <StatusSlot $w={61}>
        <svg width={30} height={30} viewBox="0 0 30 30">
          <circle cx={15} cy={15} r={15} fill="#c58fd0" />
          <path d="M15 0a15 15 0 0 1 15 15H15z" fill="#e9a35e" />
          <path d="M0 15a15 15 0 0 0 15 15V15z" fill="#5cb9ec" />
          <circle cx={15} cy={15} r={10.500} fill="rgba(240,170,190,.55)" stroke="#fff" strokeWidth={2} />
          <path d="M7 12c5-3 11 9 16 6M7 19c5 1 11-9 16-6" stroke="#fff" strokeWidth={1.800} fill="none" />
        </svg>
      </StatusSlot>
      <Clock $w={156} $ls={0.1}>Thu Dec 12</Clock>
      <Clock $w={73} $ls={0.9}>19:34</Clock>
    </StatusArea>
  );
}

export default function App() {
  return (
    <>
      <Global />
      <Defs />
      <Desktop>
        <MenuBar>
          <AppleMark preserveAspectRatio="none" />
          <MenuItem $w={218} $bold>Scene Builder</MenuItem>
          {menus.map(([label, w]) => <MenuItem key={label} $w={w}>{label}</MenuItem>)}
          <Spacer />
          <Status />
        </MenuBar>
        <ReturnWindow />
        <HiddenWindow />
        <RentWindow />
        <Dock />
      </Desktop>
    </>
  );
}
